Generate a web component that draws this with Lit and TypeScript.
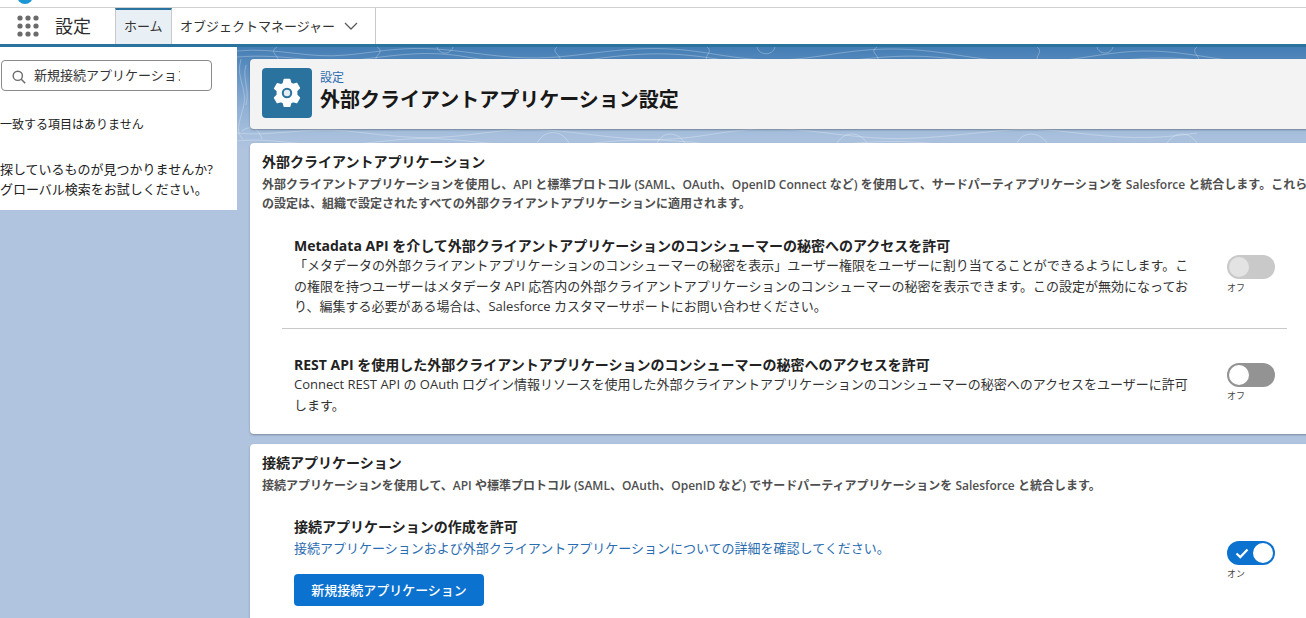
import { LitElement, html, css, svg } from "lit";
import { customElement } from "lit/decorators.js";

const contours = svg`
  <g fill="none" stroke="#fff" stroke-opacity=".28" stroke-width="1">
    <path d="M0 4c40-4 70 8 110 4s60-10 110-4 70 10 120 4 80-10 130-2 70 10 120 2 80-8 130 0 80 10 130 2 70-8 120 0 70 6 120 0"/>
    <path d="M0 10c50-4 80 8 120 3s70-10 110-3 70 10 120 3 80-9 130-1 70 9 120 3 80-9 130-1 80 8 130 2 70-7 120-1"/>
    <path d="M0 86c30 4 70-6 110-2s70 10 120 4 60-8 110-2 80 10 130 2 70-8 120-2 70 8 130 2 70-8 120-2 80 6 120 0"/>
    <path d="M0 94c40-4 70 8 120 3s60-8 110-3 80 8 120 3 70-6 120 0 70 8 120 2 80-6 130 0 70 6 120 0"/>
    <path d="M40 0c-10 6 6 10 0 16M140 0c10 6-8 10 2 16M320 0c-8 6 10 10 0 16M470 0c8 6-8 10 4 16M640 0c-10 6 8 10-2 16M800 0c8 6-6 10 4 16M960 0c-8 6 8 10-2 16"/>
    <path d="M4 12c-6 20 8 30 2 50s-6 24 0 30M9 18c-4 14 4 24 0 40M5 84c8-6 16-4 20 8M300 96c8-14 24-14 32 0M420 96c6-12 20-12 28 0M600 96c8-12 22-12 30 0M780 96c6-12 22-12 30 0M930 96c8-12 22-12 30 0"/>
    <path d="M200 0c2 8 14 8 16 0M520 0c2 9 16 9 18 0M860 0c2 8 14 8 16 0"/>
  </g>`;

@customElement("app-root")
export class AppRoot extends LitElement {
  static styles = css`
    :host { display: block; height: 618px; overflow: hidden; background: #fff; color: #181818;
      font-family: "Open Sans", "Noto Sans CJK JP", sans-serif; font-size: 13px; }
    * { box-sizing: border-box; }
    .strip { height: 8px; border-bottom: 1px solid #d0d0d0; position: relative; overflow: hidden; }
    .logo { position: absolute; left: 17px; top: -12px; width: 16px; height: 16px; border-radius: 50%; background: #1b96d4; }
    .nav { height: 36px; display: flex; align-items: stretch; }
    .waffle { width: 55px; display: flex; align-items: center; padding-left: 17px; }
    .app { width: 60px; font-size: 18px; line-height: 36px; color: #2e2e2e; }
    .tab { font-size: 13px; line-height: 37px; color: #333; padding: 0 9px; border-right: 1px solid #c9c9c9; }
    .tab.home { width: 57px; background: #e8f0f5; border-top: 2.5px solid #2a739e; border-left: 1px solid #c9c9c9; line-height: 33px; padding: 0 8px; }
    .tab.obj { width: 204px; display: flex; align-items: center; gap: 9px; padding: 0 0 0 8px; }
    .body { height: 574px; border-top: 3px solid #2a739e; display: grid; grid-template-columns: 237px 1fr; }
    .side { background: #b0c4df; }
    .panel { background: #fff; height: 163px; padding: 13px 0 0 1px; font-size: 12px; line-height: 20px; color: #222; }
    .search { width: 211px; height: 31px; border: 1px solid #8a8a8a; border-radius: 4px; display: flex; align-items: center; padding-left: 10px; gap: 8px; font-size: 13px; color: #333; }
    .search svg { margin-top: 2px; }
    .search span { width: 146px; overflow: hidden; white-space: nowrap; margin-top: -2px; }
    .none { margin-top: 24px; margin-left: -1px; }
    .hint { margin-top: 25px; margin-left: -1px; font-size: 13px; line-height: 19.5px; }
    .main { position: relative; overflow: hidden; padding: 12px 0 0 13px; min-width: 0;
      background: linear-gradient(#437db4 0, #5c8ec0 20px, #8fafd4 60px, #a8c0dd 90px, #b0c4df 105px); }
    .topo { position: absolute; left: 0; top: 0; width: 1069px; height: 105px; }
    .head, .card { position: relative; width: 1080px; border-radius: 4px; box-shadow: 0 1px 2px rgba(0,0,0,.3); }
    .head { height: 70px; background: #f3f3f3; display: flex; padding: 9px 12px; gap: 8px; }
    .tile { width: 50px; height: 50px; border-radius: 4px; background: #2a739e; display: flex; align-items: center; justify-content: center; }
    .crumb { font-size: 12px; line-height: 16px; color: #2a6cb0; margin-top: 2px; }
    .title { font-size: 20px; font-weight: 700; line-height: 26px; color: #181818; white-space: nowrap; margin-top: 1px; }
    .card { background: #fff; margin-top: 14px; padding: 9px 12px 0; }
    .card.a { height: 291px; }
    .card.b { height: 200px; margin-top: 10px; }
    h2 { margin: 0; font-size: 14px; line-height: 20px; font-weight: 700; color: #222; }
    .sub { font-size: 12px; line-height: 19px; font-weight: 600; color: #4f4f4f; white-space: nowrap; margin-top: 3px; }
    .row { display: flex; justify-content: space-between; margin: 0 0 0 20px; padding: 0 12px; width: 1005px; }
    .row.first { margin-top: 23px; height: 93px; border-bottom: 1px solid #c9c9c9; }
    .row.second { margin-top: 26px; }
    .row.third { margin-top: 22px; }
    h3 { margin: 0; font-size: 14px; line-height: 20px; font-weight: 700; color: #222; }
    .txt { font-size: 13px; line-height: 20.5px; color: #333; white-space: nowrap; margin-top: -1px; }
    .link { color: #2a6cb0; margin-top: 1px; }
    .btn { display: block; margin-top: 15.5px; width: 190px; height: 32px; line-height: 32px; border-radius: 4px; background: #0b72d0; color: #fff; text-align: center; font-size: 13px; font-weight: 500; }
    .tog { width: 48px; flex: none; }
    .first .tog { padding-top: 19px; }
    .second .tog { padding-top: 8px; }
    .third .tog { padding-top: 24px; }
    .track { height: 24px; border-radius: 12px; display: flex; align-items: center; padding: 0 2px; }
    .knob { width: 20px; height: 20px; border-radius: 50%; background: #fff; }
    .track.dis { background: #c9c9c9; }
    .track.dis .knob { background: #e3e3e3; }
    .track.off { background: #939393; }
    .track.on { background: #0b72d0; justify-content: space-between; padding: 0 2px 0 8px; }
    .state { font-size: 9px; line-height: 14px; color: #444; margin-top: 2px; }
  `;

  waffle() {
    const dots = [];
    for (let y = 0; y < 3; y++) for (let x = 0; x < 3; x++)
      dots.push(svg`<circle cx=${3 + x * 8} cy=${3 + y * 8} r="2.6" fill="#6b6b6b"/>`);
    return html`<svg width="22" height="22" viewBox="0 0 22 22">${dots}</svg>`;
  }

  render() {
    return html`
      <div class="strip"><div class="logo"></div></div>
      <div class="nav">
        <div class="waffle">${this.waffle()}</div>
        <div class="app">設定</div>
        <div class="tab home">ホーム</div>
        <div class="tab obj">オブジェクトマネージャー
          <svg width="14" height="8" viewBox="0 0 14 8"><path d="M1 1l6 6 6-6" fill="none" stroke="#5c5c5c" stroke-width="1.3"/></svg>
        </div>
      </div>
      <div class="body">
        <div class="side">
          <div class="panel">
            <div class="search">
              <svg width="14" height="14" viewBox="0 0 14 14"><circle cx="5.8" cy="5.8" r="4.6" fill="none" stroke="#6b6b6b" stroke-width="1.4"/><path d="M9.2 9.2l4 4" stroke="#6b6b6b" stroke-width="1.5"/></svg>
              <span>新規接続アプリケーション</span>
            </div>
            <div class="none">一致する項目はありません</div>
            <div class="hint">探しているものが見つかりませんか?<br>グローバル検索をお試しください。</div>
          </div>
        </div>
        <div class="main">
          <svg class="topo" viewBox="0 0 1069 105" preserveAspectRatio="none">${contours}</svg>
          <div class="head">
            <div class="tile">
              <svg width="32" height="32" viewBox="0 0 28 28">
                <path fill="#fff" stroke="#fff" stroke-width="1.2" stroke-linejoin="round" fill-rule="evenodd" d="M11.6 2.2h4.8l.9 3.2 2 1 3.2-.9 2.4 4.2-2.4 2.4v3.7l2.4 2.4-2.4 4.2-3.2-.9-2 1-.9 3.200h-4.800l-.9-3.200-2-1-3.200.9-2.400-4.200 2.400-2.400v-3.700L3.100 10.100l2.400-4.200 3.200.9 2-1zM14 8.800a5.200 5.200 0 1 0 0 10.400 5.200 5.200 0 0 0 0-10.400z"/>
                <circle cx="14" cy="14" r="2.800" fill="#e6edf3"/>
              </svg>
            </div>
            <div>
              <div class="crumb">設定</div>
              <div class="title">外部クライアントアプリケーション設定</div>
            </div>
          </div>
          <div class="card a">
            <h2>外部クライアントアプリケーション</h2>
            <div class="sub">外部クライアントアプリケーションを使用し、API と標準プロトコル (SAML、OAuth、OpenID Connect など) を使用して、サードパーティアプリケーションを Salesforce と統合します。これら<br>の設定は、組織で設定されたすべての外部クライアントアプリケーションに適用されます。</div>
            <div class="row first">
              <div>
                <h3>Metadata API を介して外部クライアントアプリケーションのコンシューマーの秘密へのアクセスを許可</h3>
                <div class="txt">「メタデータの外部クライアントアプリケーションのコンシューマーの秘密を表示」ユーザー権限をユーザーに割り当てることができるようにします。こ<br>の権限を持つユーザーはメタデータ API 応答内の外部クライアントアプリケーションのコンシューマーの秘密を表示できます。この設定が無効になってお<br>り、編集する必要がある場合は、Salesforce カスタマーサポートにお問い合わせください。</div>
              </div>
              <div class="tog"><div class="track dis"><div class="knob"></div></div><div class="state">オフ</div></div>
            </div>
            <div class="row second">
              <div>
                <h3>REST API を使用した外部クライアントアプリケーションのコンシューマーの秘密へのアクセスを許可</h3>
                <div class="txt">Connect REST API の OAuth ログイン情報リソースを使用した外部クライアントアプリケーションのコンシューマーの秘密へのアクセスをユーザーに許可<br>します。</div>
              </div>
              <div class="tog"><div class="track off"><div class="knob"></div></div><div class="state">オフ</div></div>
            </div>
          </div>
          <div class="card b">
            <h2>接続アプリケーション</h2>
            <div class="sub">接続アプリケーションを使用して、API や標準プロトコル (SAML、OAuth、OpenID など) でサードパーティアプリケーションを Salesforce と統合します。</div>
            <div class="row third">
              <div>
                <h3>接続アプリケーションの作成を許可</h3>
                <div class="txt link">接続アプリケーションおよび外部クライアントアプリケーションについての詳細を確認してください。</div>
                <div class="btn">新規接続アプリケーション</div>
              </div>
              <div class="tog">
                <div class="track on">
                  <svg width="14" height="11" viewBox="0 0 14 11"><path d="M1.5 5.5l3.8 3.6L12.5 1.5" fill="none" stroke="#fff" stroke-width="2.2"/></svg>
                  <div class="knob"></div>
                </div>
                <div class="state">オン</div>
              </div>
            </div>
          </div>
        </div>
      </div>
    `;
  }
}
